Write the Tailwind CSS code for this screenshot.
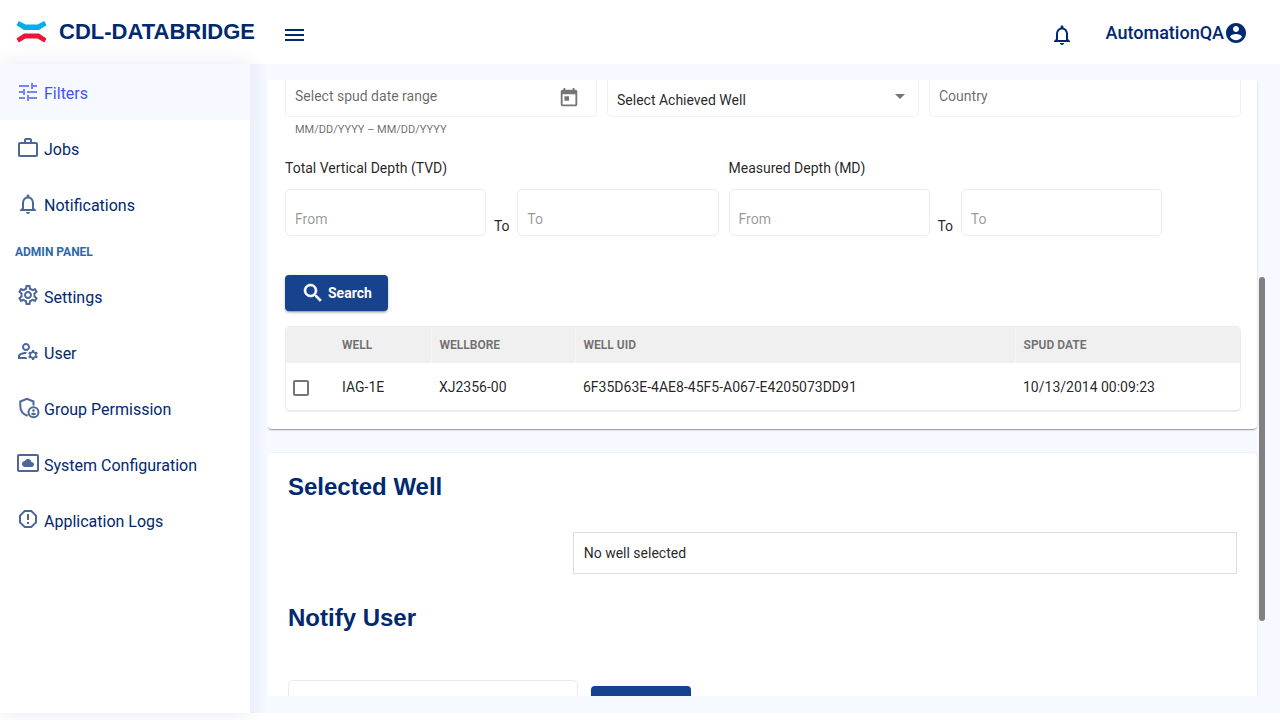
<!DOCTYPE html>
<html lang="en">
<head>
<meta charset="utf-8">
<meta name="viewport" content="width=device-width, initial-scale=1">
<title>CDL-DataBridge</title>
<script src="https://cdn.jsdelivr.net/npm/@tailwindcss/browser@4"></script>
</head>
<body class="flex h-screen flex-col overflow-hidden bg-white font-['Roboto',sans-serif] text-sm text-black/87">
<header class="flex h-16 shrink-0 items-center text-[#012970]">
  <a href="#" class="flex w-[250px] shrink-0 items-center gap-3 pl-4 whitespace-nowrap">
    <svg class="h-[22px] w-[31px] shrink-0" viewBox="0 0 30 22" aria-hidden="true">
      <path fill="#00adee" d="M2.2 0 9 3.600h12L27.800 0 30 4.200 22.500 9h-15L0 4.200z"/>
      <path fill="#eb1537" d="M2.200 21.600 9 17.600h12l6.800 4L30 17.400 22.500 12.400h-15L0 17.400z"/>
    </svg>
    <span class="font-['Liberation_Sans',Arial,sans-serif] text-[22px] leading-7 font-bold">CDL-DATABRIDGE</span>
  </a>
  <button type="button" aria-label="Toggle menu" class="mt-[6px] ml-8">
    <svg class="size-6 fill-current" viewBox="0 0 24 24"><path d="M3 18h19v-2H3v2zm0-5h19v-2H3v2zm0-7v2h19V6H3z"/></svg>
  </button>
  <div class="ml-auto flex items-center pr-8">
    <button type="button" aria-label="Notifications" class="mt-[6px] mr-8">
      <svg class="size-6 fill-current" viewBox="0 0 24 24"><path d="M12 22c1.100 0 2-.9 2-2h-4c0 1.100.9 2 2 2zm6-6v-5c0-3.070-1.630-5.640-4.500-6.320V4c0-.83-.67-1.500-1.500-1.500s-1.500.67-1.500 1.500v.68C7.640 5.360 6 7.920 6 11v5l-2 2v1h16v-1l-2-2zm-2 1H8v-6c0-2.480 1.510-4.500 4-4.500s4 2.020 4 4.500v6z"/></svg>
    </button>
    <button type="button" class="flex items-center pt-[2px] text-lg font-medium">AutomationQA
      <svg class="size-6 fill-current" viewBox="0 0 24 24" aria-hidden="true"><path d="M12 2C6.480 2 2 6.480 2 12s4.480 10 10 10 10-4.480 10-10S17.520 2 12 2zm0 3c1.660 0 3 1.340 3 3s-1.340 3-3 3-3-1.340-3-3 1.340-3 3-3zm0 14.200c-2.500 0-4.710-1.280-6-3.220.03-1.990 4-3.080 6-3.080 1.990 0 5.970 1.090 6 3.080-1.290 1.940-3.500 3.220-6 3.220z"/></svg>
    </button>
  </div>
</header>
<div class="mb-[7px] flex min-h-0 flex-1">
  <nav aria-label="Main" class="relative w-[250px] shrink-0 bg-white text-base text-[#012970] shadow-[0_0_20px_rgba(1,41,112,0.1)]">
    <a href="#" aria-current="page" class="flex h-14 items-center gap-1 bg-[#f6f9ff] px-4 text-[#4154f1]">
      <svg class="size-6 fill-current opacity-70" viewBox="0 0 24 24" aria-hidden="true"><path d="M3 17v2h6v-2H3zM3 5v2h10V5H3zm10 16v-2h8v-2h-8v-2h-2v6h2zM7 9v2H3v2h4v2h2V9H7zm14 4v-2H11v2h10zm-6-4h2V7h4V5h-4V3h-2v6z"/></svg>
      <span class="pt-1">Filters</span>
    </a>
    <a href="#" class="flex h-14 items-center gap-1 px-4">
      <svg class="size-6 fill-current opacity-70" viewBox="0 0 24 24" aria-hidden="true"><path d="M14 6V4h-4v2h4zM4 8v11h16V8H4zm16-2c1.110 0 2 .89 2 2v11c0 1.110-.89 2-2 2H4c-1.110 0-2-.89-2-2l.01-11c0-1.110.88-2 1.990-2h4V4c0-1.110.89-2 2-2h4c1.110 0 2 .89 2 2v2h4z"/></svg>
      <span class="pt-1">Jobs</span>
    </a>
    <a href="#" class="flex h-14 items-center gap-1 px-4">
      <svg class="size-6 fill-current opacity-70" viewBox="0 0 24 24" aria-hidden="true"><path d="M12 22c1.100 0 2-.9 2-2h-4c0 1.100.9 2 2 2zm6-6v-5c0-3.070-1.630-5.640-4.500-6.320V4c0-.83-.67-1.500-1.500-1.500s-1.500.67-1.500 1.500v.68C7.640 5.360 6 7.920 6 11v5l-2 2v1h16v-1l-2-2zm-2 1H8v-6c0-2.480 1.510-4.500 4-4.500s4 2.020 4 4.500v6z"/></svg>
      <span class="pt-1">Notifications</span>
    </a>
    <h2 class="flex h-9 items-center px-[15px] pt-1 text-xs font-bold text-[#3069a8]">ADMIN PANEL</h2>
    <a href="#" class="flex h-14 items-center gap-1 px-4">
      <svg class="mb-[2px] size-6 fill-current opacity-70" viewBox="0 0 24 24" aria-hidden="true"><path d="M19.43 12.98c.04-.32.07-.64.07-.98 0-.34-.03-.66-.07-.98l2.11-1.65c.19-.15.24-.42.12-.64l-2-3.46c-.09-.16-.26-.25-.44-.25-.06 0-.12.01-.17.03l-2.49 1c-.52-.4-1.08-.73-1.69-.98l-.38-2.65C14.46 2.18 14.25 2 14 2h-4c-.25 0-.46.18-.49.42l-.38 2.65c-.61.25-1.17.59-1.69.98l-2.49-1c-.06-.02-.12-.03-.18-.03-.17 0-.34.09-.43.25l-2 3.46c-.13.22-.07.49.12.64l2.11 1.65c-.04.32-.07.65-.07.98 0 .33.03.66.07.98l-2.11 1.65c-.19.15-.24.42-.12.64l2 3.46c.09.16.26.25.44.25.06 0 .12-.01.17-.03l2.49-1c.52.4 1.08.73 1.69.98l.38 2.65c.03.24.24.42.49.42h4c.25 0 .46-.18.49-.42l.38-2.65c.61-.25 1.17-.59 1.69-.98l2.49 1c.06.02.12.03.18.03.17 0 .34-.09.43-.25l2-3.46c.12-.22.07-.49-.12-.64l-2.11-1.65zm-1.98-1.71c.04.31.05.52.05.73 0 .21-.02.43-.05.73l-.14 1.13.89.7 1.08.84-.7 1.21-1.27-.51-1.04-.42-.9.68c-.43.32-.84.56-1.25.73l-1.06.43-.16 1.13-.2 1.35h-1.4l-.19-1.35-.16-1.13-1.06-.43c-.43-.18-.83-.41-1.23-.71l-.91-.7-1.06.43-1.27.51-.7-1.21 1.08-.84.89-.7-.14-1.13c-.03-.31-.05-.54-.05-.74s.02-.43.05-.73l.14-1.13-.89-.7-1.08-.84.7-1.21 1.27.51 1.04.42.9-.68c.43-.32.84-.56 1.25-.73l1.06-.43.16-1.13.2-1.35h1.39l.19 1.35.16 1.13 1.06.43c.43.18.83.41 1.23.71l.91.7 1.06-.43 1.27-.51.7 1.21-1.07.85-.89.7.14 1.13zM12 8c-2.21 0-4 1.79-4 4s1.79 4 4 4 4-1.79 4-4-1.79-4-4-4zm0 6c-1.1 0-2-.9-2-2s.9-2 2-2 2 .9 2 2-.9 2-2 2z"/></svg>
      <span class="pt-1">Settings</span>
    </a>
    <a href="#" class="flex h-14 items-center gap-1 px-4">
      <svg class="mb-[2px] size-6 fill-current opacity-70" viewBox="0 0 24 24" aria-hidden="true"><path d="M4 18v-.65c0-.34.16-.66.41-.81C6.1 15.53 8.03 15 10 15c.03 0 .05 0 .08.01.1-.7.3-1.37.59-1.98-.22-.02-.44-.03-.67-.03-2.42 0-4.68.67-6.61 1.82-.88.52-1.39 1.5-1.39 2.53V20h9.26c-.42-.6-.75-1.28-.97-2H4zM10 12c2.21 0 4-1.79 4-4s-1.79-4-4-4-4 1.79-4 4 1.79 4 4 4zm0-6c1.1 0 2 .9 2 2s-.9 2-2 2-2-.9-2-2 .9-2 2-2zM20.75 16c0-.22-.03-.42-.06-.63l1.14-1.01-1-1.73-1.45.49c-.32-.27-.68-.48-1.08-.63L18 11h-2l-.3 1.49c-.4.15-.76.36-1.08.63l-1.45-.49-1 1.73 1.14 1.01c-.03.21-.06.41-.06.63s.03.42.06.63l-1.14 1.01 1 1.73 1.45-.49c.32.27.68.48 1.08.63L16 21h2l.3-1.49c.4-.15.76-.36 1.08-.63l1.45.49 1-1.73-1.14-1.01c.03-.21.06-.41.06-.63zM17 18c-1.1 0-2-.9-2-2s.9-2 2-2 2 .9 2 2-.9 2-2 2z"/></svg>
      <span class="pt-1">User</span>
    </a>
    <a href="#" class="flex h-14 items-center gap-1 px-4">
      <svg class="mb-[2px] size-6 opacity-70" viewBox="0 0 24 24" fill="none" stroke="currentColor" stroke-width="2" aria-hidden="true"><path d="M17.500 10.500V6.500L11 3.800 4.300 6.500V11c0 4.600 2.700 8.300 7.300 9.700"/><circle cx="17.500" cy="17.200" r="5"/><circle cx="17.500" cy="15.500" r="1.300" fill="currentColor" stroke="none"/><path fill="currentColor" stroke="none" d="M14.900 19c.5-.8 1.600-1.200 2.600-1.200s2.100.4 2.600 1.200c-.5.8-1.500 1.300-2.600 1.300s-2.100-.5-2.600-1.300z"/></svg>
      <span class="pt-1">Group Permission</span>
    </a>
    <a href="#" class="flex h-14 items-center gap-1 px-4">
      <svg class="mb-[2px] size-6 fill-current opacity-70" viewBox="0 0 24 24" aria-hidden="true"><path d="M9 16h6.500c1.380 0 2.500-1.120 2.500-2.500S16.880 11 15.500 11h-.05c-.24-1.690-1.690-3-3.450-3-1.400 0-2.600.83-3.160 2.020h-.16C7.170 10.180 6 11.450 6 13c0 1.660 1.340 3 3 3zM21 3H3c-1.100 0-2 .9-2 2v14c0 1.100.9 2 2 2h18c1.100 0 2-.9 2-2V5c0-1.100-.9-2-2-2zm0 16.010H3V4.990h18v14.020z"/></svg>
      <span class="pt-1">System Configuration</span>
    </a>
    <a href="#" class="flex h-14 items-center gap-1 px-4">
      <svg class="mb-[2px] size-6 fill-current opacity-70" viewBox="0 0 24 24" aria-hidden="true"><path d="M15.730 3H8.270L3 8.270v7.460L8.270 21h7.460L21 15.730V8.270L15.730 3zM19 14.900 14.900 19H9.100L5 14.900V9.100L9.100 5h5.800L19 9.100v5.800zM11 7h2v6h-2zM11 15h2v2h-2z"/></svg>
      <span class="pt-1">Application Logs</span>
    </a>
  </nav>
  <main class="relative min-w-0 flex-1 overflow-hidden bg-[#f6f9ff] pt-4 pb-[17px]">
    <div class="pointer-events-none absolute inset-y-0 left-0 w-[18px] bg-linear-to-r from-[#eaeffa] to-[#f6f9ff]"></div>
    <div class="absolute top-[213px] right-[15px] h-[344px] w-[6px] rounded-full bg-[#808080]"></div>
    <div class="h-full overflow-hidden pr-[23px] pl-[18px]">
      <section class="rounded-b bg-white pr-4 pb-[17px] pl-[17px] shadow-[0_2px_1px_-1px_rgba(0,0,0,0.2),0_1px_1px_rgba(0,0,0,0.14),0_1px_3px_rgba(0,0,0,0.12)]">
        <div class="grid grid-cols-3 gap-[10px]">
          <div>
            <div class="flex h-[37px] items-center rounded-b-[5px] border border-t-0 border-[#f0f0f0] pr-4 pl-[9px]">
              <input aria-label="Select spud date range" placeholder="Select spud date range" class="min-w-0 flex-1 pb-1 placeholder:text-black/60 outline-none">
              <button type="button" aria-label="Open calendar" class="text-[#757575]"><svg class="size-[22px] fill-current" viewBox="0 0 24 24"><path d="M19 3h-1V1h-2v2H8V1H6v2H5c-1.110 0-1.990.9-1.990 2L3 19c0 1.100.89 2 2 2h14c1.100 0 2-.9 2-2V5c0-1.100-.9-2-2-2zm0 16H5V8h14v11zM7 10h5v5H7z"/></svg></button>
            </div>
            <p class="pt-[5px] pl-[10px] text-[11px] leading-4 text-black/60">MM/DD/YYYY – MM/DD/YYYY</p>
          </div>
          <div class="relative h-[37px]">
            <select aria-label="Achieved well" class="h-full w-full appearance-none rounded-b-[5px] border border-t-0 border-[#f0f0f0] pt-1 pr-8 pl-[9px] outline-none"><option>Select Achieved Well</option></select>
            <svg class="pointer-events-none absolute top-[14px] right-[14px] h-[5px] w-[10px]" viewBox="0 0 10 5" aria-hidden="true"><path fill="#757575" d="M0 0h10L5 5z"/></svg>
          </div>
          <input aria-label="Country" placeholder="Country" class="h-[37px] w-full min-w-0 rounded-b-[5px] border border-t-0 border-[#f0f0f0] px-[9px] pb-1 placeholder:text-black/60 outline-none">
        </div>
        <div class="mt-5 grid grid-cols-2 gap-[10px] pr-[79px]">
          <fieldset>
            <legend class="leading-5">Total Vertical Depth (TVD)</legend>
            <div class="mt-[11px] flex items-end">
              <input aria-label="TVD from" placeholder="From" class="h-[47px] w-0 min-w-0 flex-1 rounded-[5px] border border-[#ececec] px-[9px] pt-3 placeholder:text-black/42 outline-none">
              <span class="w-[31px] text-center leading-5">To</span>
              <input aria-label="TVD to" placeholder="To" class="h-[47px] w-0 min-w-0 flex-1 rounded-[5px] border border-[#ececec] px-[9px] pt-3 placeholder:text-black/42 outline-none">
            </div>
          </fieldset>
          <fieldset>
            <legend class="leading-5">Measured Depth (MD)</legend>
            <div class="mt-[11px] flex items-end">
              <input aria-label="MD from" placeholder="From" class="h-[47px] w-0 min-w-0 flex-1 rounded-[5px] border border-[#ececec] px-[9px] pt-3 placeholder:text-black/42 outline-none">
              <span class="w-[31px] text-center leading-5">To</span>
              <input aria-label="MD to" placeholder="To" class="h-[47px] w-0 min-w-0 flex-1 rounded-[5px] border border-[#ececec] px-[9px] pt-3 placeholder:text-black/42 outline-none">
            </div>
          </fieldset>
        </div>
        <button type="button" class="mt-[39px] flex h-9 items-center gap-[3px] rounded bg-[#17428e] px-4 font-bold text-white shadow-[0_3px_1px_-2px_rgba(0,0,0,0.2),0_2px_2px_rgba(0,0,0,0.14),0_1px_5px_rgba(0,0,0,0.12)]">
          <svg class="size-6 fill-current" viewBox="0 0 24 24" stroke="currentColor" stroke-width=".6" aria-hidden="true"><path d="M15.500 14h-.79l-.28-.27A6.471 6.471 0 0 0 16 9.500 6.500 6.500 0 1 0 9.500 16c1.610 0 3.090-.59 4.230-1.570l.27.28v.79l5 4.990L20.490 19l-4.990-5zm-6 0C7.010 14 5 11.990 5 9.500S7.010 5 9.500 5 14 7.010 14 9.500 11.990 14 9.500 14z"/></svg>Search
        </button>
        <div class="mt-[15px] overflow-hidden rounded-[5px] border border-b-2 border-[#ececec]">
          <table class="w-full table-fixed text-left">
            <thead class="bg-[#f0f0f0] text-xs text-black/54">
              <tr class="h-[36px]">
                <th class="w-[48px]" aria-label="Select"></th>
                <th class="w-[97px] px-2">WELL</th>
                <th class="w-[144px] border-l border-[#f5f5f5] px-2">WELLBORE</th>
                <th class="border-l border-[#f5f5f5] px-2">WELL UID</th>
                <th class="w-[225px] border-l border-[#f5f5f5] px-2">SPUD DATE</th>
              </tr>
            </thead>
            <tbody>
              <tr class="h-[47px]">
                <td class="px-[7px] pt-[3px]"><input type="checkbox" aria-label="Select well IAG-1E" class="block size-4 appearance-none rounded-[2px] border-2 border-[#757575] checked:bg-[#17428e]"></td>
                <td class="px-2">IAG-1E</td>
                <td class="px-2">XJ2356-00</td>
                <td class="px-2">6F35D63E-4AE8-45F5-A067-E4205073DD91</td>
                <td class="px-2">10/13/2014 00:09:23</td>
              </tr>
            </tbody>
          </table>
        </div>
      </section>
      <section class="mt-6 rounded bg-white px-5 pt-[18px] pb-8 shadow-[0_2px_1px_-1px_rgba(0,0,0,0.2),0_1px_1px_rgba(0,0,0,0.14),0_0_2px_rgba(0,0,0,0.12)]">
        <h2 class="font-['Liberation_Sans',Arial,sans-serif] text-2xl font-bold text-[#012970]">Selected Well</h2>
        <div class="mt-[29px] ml-[30%] flex h-[42px] items-center border border-[#dedede] px-[10px]">No well selected</div>
        <h2 class="mt-[28px] font-['Liberation_Sans',Arial,sans-serif] text-2xl font-bold text-[#012970]">Notify User</h2>
        <form class="mt-[46px] flex items-start gap-[13px]">
          <input aria-label="User to notify" class="h-12 w-[290px] rounded-[5px] border border-[#ececec] px-[10px] outline-none">
          <button type="button" aria-label="Notify" class="mt-[6px] h-9 w-[100px] rounded bg-[#17428e] shadow-sm"></button>
        </form>
      </section>
    </div>
  </main>
</div>
</body>
</html>
